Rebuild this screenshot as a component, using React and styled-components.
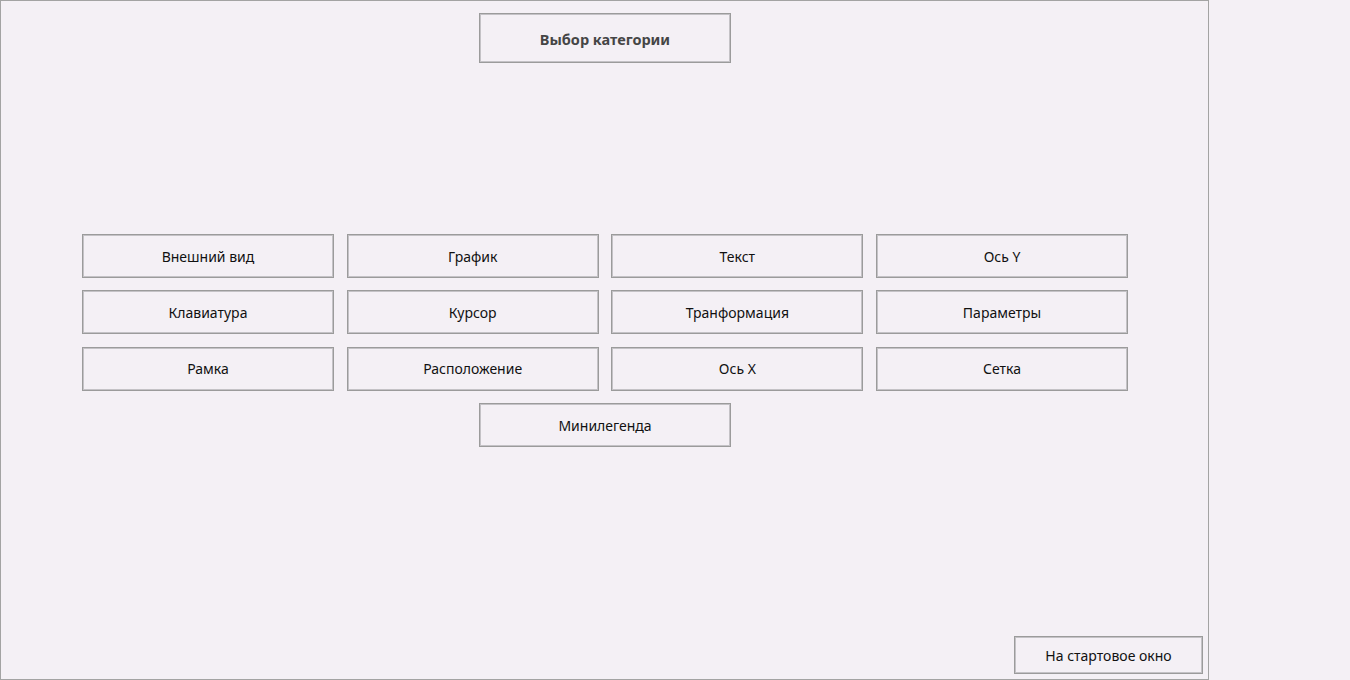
import React from "react";
import styled, { createGlobalStyle } from "styled-components";

const Global = createGlobalStyle`
  html, body { margin: 0; padding: 0; background: #f4f0f5; }
  body { font-family: "Noto Sans", "DejaVu Sans", sans-serif; }
  #root { width: 1350px; height: 680px; }
`;

const Frame = styled.div`
  box-sizing: border-box;
  width: 1209px;
  height: 680px;
  border: 1px solid #a3a3a3;
  display: flex;
  flex-direction: column;
  align-items: center;
  background: #f4f0f5;
`;

const Button = styled.button`
  box-sizing: border-box;
  width: ${(p) => p.$w || 252}px;
  height: ${(p) => p.$h || 44}px;
  background: #f4f0f5;
  border: 1px solid #9b9b9b;
  box-shadow: inset 0 0 0 1px #c4c2c6;
  font-family: "Noto Sans", "DejaVu Sans", sans-serif;
  font-size: 14px;
  color: #111;
  padding: 0;
  cursor: pointer;
`;

const Title = styled(Button)`
  margin-top: 12px;
  margin-left: 1px;
  font-weight: bold;
  font-size: 14.5px;
  color: #454545;
  padding-top: 2px;
`;

const Grid = styled.div`
  margin-top: 171px;
  margin-left: 1px;
  display: grid;
  grid-template-columns: repeat(4, 252px);
  grid-auto-rows: 44px;
  column-gap: 12.7px;
  row-gap: 12.4px;
`;

const Center = styled.div`
  grid-column: 1 / 5;
  display: flex;
  justify-content: center;
`;

const Spacer = styled.div`
  flex: 1;
`;

const Footer = styled.div`
  align-self: stretch;
  display: flex;
  justify-content: flex-end;
  padding: 0 5px 5px 0;
`;

const items = [
  "Внешний вид", "График", "Текст", "Ось Y",
  "Клавиатура", "Курсор", "Транформация", "Параметры",
  "Рамка", "Расположение", "Ось X", "Сетка",
];

export default function App() {
  return (
    <>
      <Global />
      <Frame>
        <Title $w={252} $h={50}>Выбор категории</Title>
        <Grid>
          {items.map((t) => (
            <Button key={t}>{t}</Button>
          ))}
          <Center>
            <Button $w={252}>Минилегенда</Button>
          </Center>
        </Grid>
        <Spacer />
        <Footer>
          <Button $w={189} $h={38}>На стартовое окно</Button>
        </Footer>
      </Frame>
    </>
  );
}
